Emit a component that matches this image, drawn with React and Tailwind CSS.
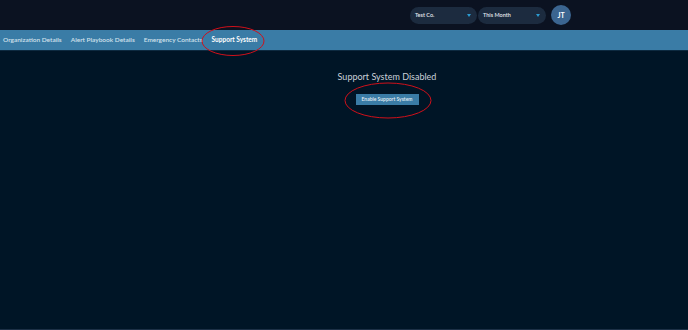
import React from "react";

const tabs = ["Organization Details", "Alert Playbook Details", "Emergency Contacts", "Support System"];

const Select = ({ label, width }) => (
  <div className={`flex h-[17px] ${width} items-center justify-between rounded-full bg-[#1c2b3f] pl-[5px] pr-[6px]`}>
    <span className="text-[5.5px] font-semibold text-[#e4e8ee]">{label}</span>
    <svg width="4" height="3" viewBox="0 0 4 3">
      <path d="M0 0 L4 0 L2 3 Z" fill="#2b9bd1" />
    </svg>
  </div>
);

const App = () => {
  return (
    <div className="flex h-[330px] w-[688px] flex-col bg-[#001526] font-['Lato',sans-serif]">
      <header className="flex h-[30px] items-center justify-end gap-[1px] bg-[#0b1221] pr-[117px]">
        <Select label="Test Co." width="w-[67px]" />
        <Select label="This Month" width="w-[68px]" />
        <div className="ml-[4px] flex h-[20px] w-[20px] items-center justify-center rounded-full bg-[#3b6590] text-[7px] font-bold text-white">
          JT
        </div>
      </header>

      <nav className="relative flex h-[21px] items-center gap-[9px] border-b border-[#0d2a40] bg-[#3a7ca6] pl-[3px] text-[6.5px] font-semibold text-[#d2e1ec]">
        {tabs.map((t) => (
          <span key={t} className={t === "Support System" ? "font-bold text-white" : ""}>
            {t}
          </span>
        ))}
        <svg className="absolute left-[201px] top-[-5px]" width="64" height="32" viewBox="0 0 64 32">
          <ellipse cx="32" cy="16" rx="31" ry="14.5" fill="none" stroke="#d0101a" strokeWidth="1" />
        </svg>
      </nav>

      <main className="flex flex-1 flex-col items-center border-b border-[#1c3046] pl-[86px] pt-[20px]">
        <h1 className="text-[9px] leading-[12px] text-[#c9d1d9]">Support System Disabled</h1>
        <div className="relative mt-[11px] flex">
          <button className="h-[11px] w-[63px] bg-[#3a7ca6] text-[5px] font-semibold leading-[11px] text-[#e6eef4]">
            Enable Support System
          </button>
          <svg className="absolute left-[-12px] top-[-12px]" width="88" height="37" viewBox="0 0 88 37">
            <ellipse cx="44" cy="18.5" rx="43" ry="17.5" fill="none" stroke="#d0101a" strokeWidth="1" />
          </svg>
        </div>
      </main>
    </div>
  );
};

export default App;
